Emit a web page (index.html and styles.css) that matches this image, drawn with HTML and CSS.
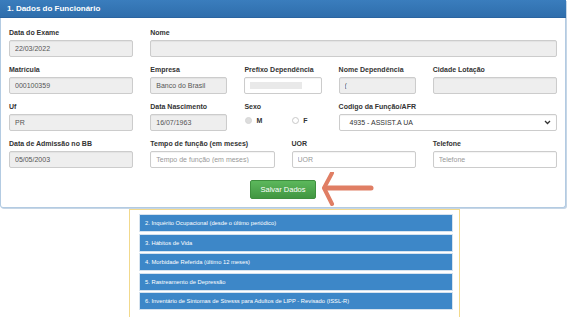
FILE: index.html
```html
<!DOCTYPE html>
<html lang="pt-br">

<head>
  <meta charset="UTF-8">
  <meta name="viewport" content="width=device-width, initial-scale=1.0">
  <title>Dados do Funcionário</title>
  <link rel="stylesheet" href="styles.css">
</head>

<body>
  <div class="panel">
    <div class="panel-heading">1. Dados do Funcionário</div>
    <div class="panel-body">
      <div class="form-grid">
        <div class="field span-3">
          <label>Data do Exame</label>
          <input type="text" value="22/03/2022" disabled>
        </div>
        <div class="field span-9">
          <label>Nome</label>
          <input type="text" value="" disabled>
        </div>

        <div class="field span-3">
          <label>Matrícula</label>
          <input type="text" value="000100359" disabled>
        </div>
        <div class="field span-2">
          <label>Empresa</label>
          <input type="text" value="Banco do Brasil" disabled>
        </div>
        <div class="field span-2">
          <label>Prefixo Dependência</label>
          <div class="fake-input"><span class="redacted"></span></div>
        </div>
        <div class="field span-2">
          <label>Nome Dependência</label>
          <input type="text" value="(" disabled>
        </div>
        <div class="field span-3">
          <label>Cidade Lotação</label>
          <input type="text" value="" disabled>
        </div>

        <div class="field span-3">
          <label>Uf</label>
          <input type="text" value="PR" disabled>
        </div>
        <div class="field span-2">
          <label>Data Nascimento</label>
          <input type="text" value="16/07/1963" disabled>
        </div>
        <div class="field span-2">
          <label>Sexo</label>
          <div class="radios">
            <span class="radio"><span class="dot checked"></span>M</span>
            <span class="radio"><span class="dot"></span>F</span>
          </div>
        </div>
        <div class="field span-5">
          <label>Codigo da Função/AFR</label>
          <div class="select">
            <span>4935 - ASSIST.A UA</span>
            <svg width="7" height="5" viewBox="0 0 7 5">
              <path d="M1 1 L3.5 3.5 L6 1" fill="none" stroke="#333" stroke-width="1.3" />
            </svg>
          </div>
        </div>

        <div class="field span-3">
          <label>Data de Admissão no BB</label>
          <input type="text" value="05/05/2003" disabled>
        </div>
        <div class="field span-3">
          <label>Tempo de função (em meses)</label>
          <input type="text" placeholder="Tempo de função (em meses)">
        </div>
        <div class="field span-3">
          <label>UOR</label>
          <input type="text" placeholder="UOR">
        </div>
        <div class="field span-3">
          <label>Telefone</label>
          <input type="text" placeholder="Telefone">
        </div>
      </div>

      <div class="actions">
        <button class="btn-save">Salvar Dados</button>
      </div>
    </div>

    <svg class="arrow" width="60" height="40" viewBox="0 0 60 40">
      <path d="M5 16 L51 16" stroke="#e07e64" stroke-width="5" stroke-linecap="round" fill="none" />
      <path d="M12 1 L4 16 L12 32" stroke="#e07e64" stroke-width="4" stroke-linecap="round" stroke-linejoin="round" fill="none" />
    </svg>
  </div>

  <div class="sections">
    <div class="section-bar">2. Inquérito Ocupacional (desde o último periódico)</div>
    <div class="section-bar">3. Hábitos de Vida</div>
    <div class="section-bar">4. Morbidade Referida (último 12 meses)</div>
    <div class="section-bar">5. Rastreamento de Depressão</div>
    <div class="section-bar">6. Inventário de Sintomas de Stresss para Adultos de LIPP - Revisado (ISSL-R)</div>
  </div>
</body>

</html>
```

FILE: styles.css
```css
html,
body {
  margin: 0;
  height: 100%;
  overflow: hidden;
  background: #fff;
  font-family: "Liberation Sans", Arial, sans-serif;
  color: #333;
}

.panel {
  position: relative;
  z-index: 1;
  width: 564px;
  border: 1px solid #b3cbe2;
  border-top: none;
  border-radius: 0 0 3px 3px;
  box-shadow: 1px 1px 0 #c6d6e6;
  background: #fff;
}

.panel-heading {
  height: 17px;
  line-height: 17px;
  padding-left: 7px;
  font-size: 8px;
  font-weight: bold;
  color: #fff;
  background: linear-gradient(#3a7dbd, #2f6eac);
  border-bottom: 1px solid #2a64a0;
  margin: 0 -1px;
}

.panel-body {
  padding: 10px 8px 8px 8px;
}

.form-grid {
  display: grid;
  grid-template-columns: repeat(12, 1fr);
  column-gap: 17px;
  row-gap: 8px;
}

.span-2 { grid-column: span 2; }
.span-3 { grid-column: span 3; }
.span-5 { grid-column: span 5; }
.span-9 { grid-column: span 9; }

.field label {
  display: block;
  font-size: 7px;
  font-weight: bold;
  line-height: 9px;
  margin-bottom: 3px;
}

.field input,
.fake-input,
.select {
  box-sizing: border-box;
  display: block;
  width: 100%;
  height: 17px;
  margin: 0;
  padding: 0 5px;
  border: 1px solid #ccc;
  border-radius: 2px;
  background: #fff;
  font-family: inherit;
  font-size: 7px;
  color: #555;
  outline: none;
  box-shadow: inset 0 1px 1px rgba(0, 0, 0, 0.05);
}

.field input:disabled {
  background: #eee;
  color: #555;
}

.field input::placeholder {
  color: #999;
}

.fake-input {
  padding-top: 4px;
}

.redacted {
  display: block;
  width: 52px;
  height: 7px;
  background: #e9e9e9;
}

.radios {
  display: flex;
  gap: 30px;
  padding-top: 3px;
  padding-left: 1px;
}

.radio {
  display: flex;
  align-items: center;
  gap: 4px;
  font-size: 7px;
  font-weight: bold;
}

.dot {
  box-sizing: border-box;
  width: 7px;
  height: 7px;
  border-radius: 50%;
  border: 1px solid #c8c8c8;
  background: #fff;
}

.dot.checked {
  background: #ddd;
  border-color: #d6d6d6;
}

.select {
  display: flex;
  align-items: center;
  justify-content: space-between;
  padding: 0 5px 0 10px;
  color: #333;
}

.actions {
  display: flex;
  justify-content: center;
  margin-top: 12px;
}

.btn-save {
  height: 19px;
  padding: 0 9px;
  border: 1px solid #3e8f3e;
  border-radius: 2px;
  background: linear-gradient(#5cb85c, #419641);
  color: #fff;
  font-family: inherit;
  font-size: 7.5px;
  cursor: pointer;
}

.arrow {
  position: absolute;
  left: 319px;
  top: 172px;
}

.sections {
  box-sizing: border-box;
  width: 331px;
  margin: 1px 0 0 129px;
  padding: 4px 6px 20px 9px;
  border: 1px solid #f2d98c;
  border-bottom: none;
  height: 120px;
}

.section-bar {
  box-sizing: border-box;
  height: 18px;
  line-height: 17px;
  padding-left: 5px;
  margin-bottom: 1.5px;
  background: #3d87c8;
  border: 0.5px solid #d6e3ef;
  color: #fff;
  font-size: 5.8px;
  white-space: nowrap;
  overflow: hidden;
}
```
